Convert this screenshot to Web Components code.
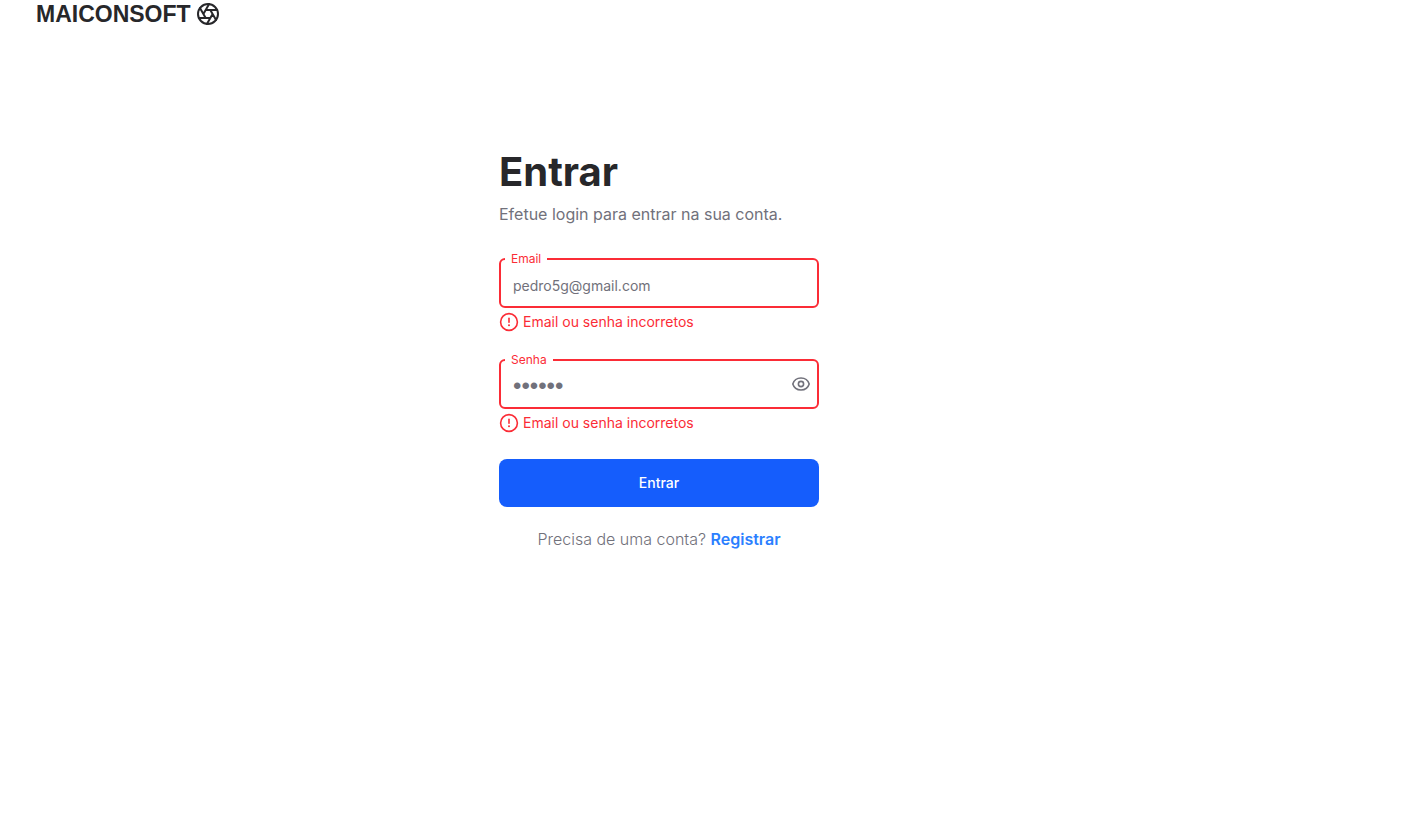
<!DOCTYPE html>
<html lang="pt-BR">
<head>
<meta charset="utf-8">
<meta name="viewport" content="width=device-width, initial-scale=1">
<title>Entrar</title>
<style>
body { margin: 0; background: #fff; color: #27272a; font-family: Inter, "Liberation Sans", sans-serif; }
</style>
</head>
<body>
<login-page></login-page>
<script>
class BrandLogo extends HTMLElement {
  constructor() {
    super();
    this.attachShadow({ mode: 'open' }).innerHTML = `
      <style>
        :host { display: flex; align-items: center; gap: 5px; font: bold 23px/28px "Liberation Sans", sans-serif; color: #27272a; }
        svg { display: block; width: 24px; height: 24px; }
      </style>
      <span><slot></slot></span>
      <svg viewBox="0 0 24 24" fill="none" stroke="currentColor" stroke-width="2" stroke-linecap="round" stroke-linejoin="round" aria-hidden="true">
        <circle cx="12" cy="12" r="10"/>
        <path d="m14.31 8 5.74 9.94M9.69 8h11.48M7.38 12l5.74-9.94M9.69 16 3.95 6.06M14.31 16H2.83M16.62 12l-5.74 9.94"/>
      </svg>`;
  }
}
customElements.define('brand-logo', BrandLogo);

class FieldError extends HTMLElement {
  constructor() {
    super();
    this.attachShadow({ mode: 'open' }).innerHTML = `
      <style>
        :host { display: flex; align-items: center; gap: 4px; font-size: 14px; line-height: 20px; color: #fb2c36; }
        svg { display: block; width: 20px; height: 20px; }
      </style>
      <svg viewBox="0 0 20 20" fill="none" stroke="currentColor" stroke-width="1.6" stroke-linecap="round" aria-hidden="true">
        <circle cx="10" cy="10" r="8.4"/>
        <path d="M10 6.4v3.8"/>
        <circle cx="10" cy="13.2" r="1" fill="currentColor" stroke="none"/>
      </svg>
      <span role="alert"><slot></slot></span>`;
  }
}
customElements.define('field-error', FieldError);

class TextField extends HTMLElement {
  connectedCallback() {
    if (this.shadowRoot) return;
    const type = this.getAttribute('type');
    const eye = `
      <button type="button" aria-label="Mostrar senha">
        <svg viewBox="0 0 20 20" fill="none" stroke="currentColor" stroke-width="1.6" stroke-linejoin="round" aria-hidden="true">
          <path d="M1.8 10C3 6.2 6 4 10 4s7 2.2 8.2 6c-1.2 3.8-4.2 6-8.2 6s-7-2.2-8.2-6z"/>
          <circle cx="10" cy="10" r="2.6"/>
        </svg>
      </button>`;
    this.attachShadow({ mode: 'open' }).innerHTML = `
      <style>
        :host { display: block; }
        fieldset { display: block; min-width: 0; margin: 0 0 4px; padding: 0 6px 0 4px; border: 2px solid #fb2c36; border-radius: 6px; }
        legend { padding: 0 6px; font-size: 12px; line-height: 16px; color: #fb2c36; }
        .row { display: flex; align-items: flex-start; height: 39px; }
        input { flex: 1; min-width: 0; height: 36px; box-sizing: border-box; margin: 0; padding: 0 8px; border: 0; outline: 0; background: none; font: inherit; font-size: 14px; line-height: 20px; color: #71717b; }
        input[type="password"] { font-family: "Liberation Sans", sans-serif; font-size: 24px; line-height: 28px; }
        button { display: block; margin: 0; padding: 6px 0 0; border: 0; background: none; color: #71717b; cursor: pointer; }
        svg { display: block; width: 20px; height: 20px; }
      </style>
      <fieldset>
        <legend><label for="control">${this.getAttribute('label')}</label></legend>
        <div class="row">
          <input id="control" type="${type}" value="${this.getAttribute('value')}" aria-invalid="true">
          ${type === 'password' ? eye : ''}
        </div>
      </fieldset>
      <slot></slot>`;
    const button = this.shadowRoot.querySelector('button');
    if (button) button.onclick = () => {
      const input = this.shadowRoot.querySelector('input');
      input.type = input.type === 'password' ? 'text' : 'password';
    };
  }
}
customElements.define('text-field', TextField);

class PrimaryButton extends HTMLElement {
  constructor() {
    super();
    this.attachShadow({ mode: 'open' }).innerHTML = `
      <style>
        :host { display: block; }
        button { display: block; width: 100%; margin: 0; padding: 14px; border: 0; border-radius: 8px; background: #155dfc; color: #fff; font: inherit; font-size: 14px; font-weight: 500; line-height: 20px; cursor: pointer; }
      </style>
      <button type="submit"><slot></slot></button>`;
  }
}
customElements.define('primary-button', PrimaryButton);

class LoginPage extends HTMLElement {
  constructor() {
    super();
    this.attachShadow({ mode: 'open' }).innerHTML = `
      <style>
        :host { display: block; }
        header { padding: 0 36px; }
        main { display: flex; justify-content: center; padding: 120px 96px 24px 0; }
        form { width: 320px; }
        h1 { margin: 0 0 6px; font-size: 40px; font-weight: 700; line-height: 48px; }
        p { margin: 0; font-size: 16px; line-height: 24px; color: #71717b; }
        .intro { margin-bottom: 25px; }
        text-field { margin-bottom: 20px; }
        primary-button { margin: 26px 0 20px; }
        .signup { text-align: center; font-weight: 300; }
        a { color: #2b7fff; font-weight: 600; text-decoration: none; }
      </style>
      <header><brand-logo>MAICONSOFT</brand-logo></header>
      <main>
        <form onsubmit="return false">
          <h1>Entrar</h1>
          <p class="intro">Efetue login para entrar na sua conta.</p>
          <text-field label="Email" type="email" value="pedro5g@gmail.com"><field-error>Email ou senha incorretos</field-error></text-field>
          <text-field label="Senha" type="password" value="123456"><field-error>Email ou senha incorretos</field-error></text-field>
          <primary-button>Entrar</primary-button>
          <p class="signup">Precisa de uma conta? <a href="#registrar">Registrar</a></p>
        </form>
      </main>`;
  }
}
customElements.define('login-page', LoginPage);
</script>
</body>
</html>
